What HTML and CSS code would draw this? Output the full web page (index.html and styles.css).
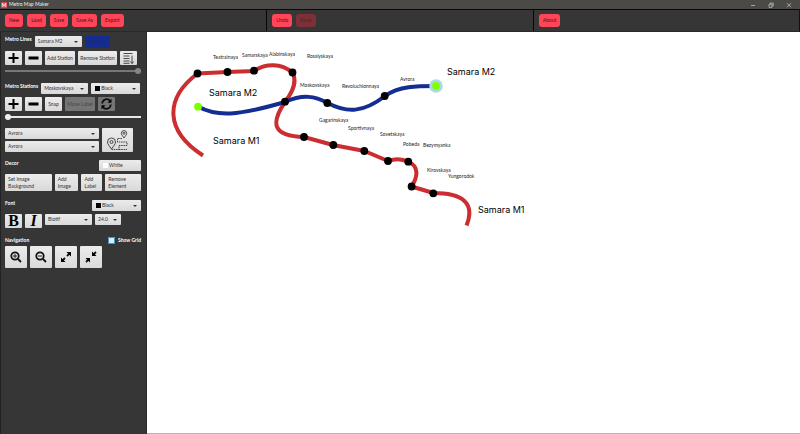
FILE: index.html
```html
<!DOCTYPE html>
<html lang="en">
<head>
<meta charset="utf-8">
<title>Metro Map Maker</title>
<link rel="stylesheet" href="styles.css">
</head>
<body>
<header class="titlebar">
  <span class="app-icon">M</span>
  <h1>Metro Map Maker</h1>
  <div class="window-controls">
    <button aria-label="Minimize"><svg viewBox="0 0 6 6"><path d="M1 3.500h4"/></svg></button>
    <button aria-label="Restore"><svg viewBox="0 0 6 6"><path d="M1 2.300h3v3H1zM2.200 2V1h3v3h-1"/></svg></button>
    <button aria-label="Close"><svg viewBox="0 0 6 6"><path d="M1 1.200l4 4M5 1.200l-4 4"/></svg></button>
  </div>
</header>
<nav class="toolbar">
  <div class="group"><button>New</button><button>Load</button><button>Save</button><button>Save As</button><button>Export</button></div>
  <div class="group"><button>Undo</button><button disabled>Redo</button></div>
  <div class="group"><button>About</button></div>
</nav>
<div class="workspace">
  <aside class="sidebar">
    <section>
      <div class="row head">
        <label class="title" for="line">Metro Lines</label>
        <span class="combo w-mid"><select id="line"><option>Samara M2</option></select></span>
        <button class="edit-line">Edit Line</button>
      </div>
      <div class="row">
        <button class="btn icon" aria-label="Add line"><svg viewBox="0 0 16 14"><path class="heavy" d="M8 2v10M3 7h10"/></svg></button>
        <button class="btn icon" aria-label="Remove line"><svg viewBox="0 0 16 14"><path class="bar" d="M3 7h10"/></svg></button>
        <button class="btn w-add">Add Station</button>
        <button class="btn w-remove">Remove Station</button>
        <button class="btn icon" aria-label="List stations"><svg viewBox="0 0 16 14"><path class="thin" d="M3 2.500h9M3 5h6M3 7.500h6M3 10h6M3 12.300h6M11.500 4.500v8M9.800 10.500l1.700 2 1.700-2"/></svg></button>
      </div>
      <input class="slider dim" type="range" aria-label="Line thickness" min="0" max="100" value="100">
    </section>

    <section>
      <div class="row head">
        <label class="title" for="station">Metro Stations</label>
        <span class="combo w-mid"><select id="station"><option>Moskovskaya</option></select></span>
        <span class="combo swatch w-color"><select aria-label="Station color"><option>Black</option></select></span>
      </div>
      <div class="row">
        <button class="btn icon" aria-label="Add station"><svg viewBox="0 0 16 14"><path class="heavy" d="M8 2v10M3 7h10"/></svg></button>
        <button class="btn icon" aria-label="Remove station"><svg viewBox="0 0 16 14"><path class="bar" d="M3 7h10"/></svg></button>
        <button class="btn icon">Snap</button>
        <button class="btn w-add" disabled>Move Label</button>
        <button class="btn icon rotate" disabled aria-label="Rotate label"><svg viewBox="0 0 16 14"><path class="arc" d="M3.700 6.500C4 1.800 9.500 1 11.700 4M12.300 7.500C12 12.200 6.500 13 4.300 10"/><path d="M13 1.800v4H9zM3 12.200v-4h4z"/></svg></button>
      </div>
      <input class="slider" type="range" aria-label="Station radius" min="0" max="100" value="0">
    </section>

    <section class="route">
      <div class="stops">
        <span class="combo"><select aria-label="Route from"><option>Avrora</option></select></span>
        <span class="combo"><select aria-label="Route to"><option>Avrora</option></select></span>
      </div>
      <button class="btn find" aria-label="Find route"><svg viewBox="0 0 31 23"><path class="thin" d="M9.500 20C7 16.500 5.500 15 5.500 13a4 4 0 0 1 8 0c0 2-1.500 3.500-4 7zM22 9c-1.700-2.500-2.700-3.500-2.700-4.700a2.700 2.700 0 0 1 5.400 0C24.700 5.500 23.700 6.500 22 9z"/><circle class="thin" cx="9.500" cy="13" r="1.500"/><circle class="thin" cx="22" cy="4.300" r="1"/><path class="dash" d="M20 9.500h-4.500v3.500H25v3.500h-8v4H9.500M17 20.500h8"/></svg></button>
    </section>

    <section>
      <div class="row head split">
        <h2 class="title">Decor</h2>
        <span class="combo swatch white"><select aria-label="Background color"><option>White</option></select></span>
      </div>
      <div class="decor">
        <button class="btn">Set Image<br>Background</button>
        <button class="btn">Add<br>Image</button>
        <button class="btn">Add<br>Label</button>
        <button class="btn">Remove<br>Element</button>
      </div>
    </section>

    <section>
      <div class="row head split">
        <h2 class="title">Font</h2>
        <span class="combo swatch w-color"><select aria-label="Font color"><option>Black</option></select></span>
      </div>
      <div class="row">
        <button class="btn icon letter bold">B</button>
        <button class="btn icon letter italic">I</button>
        <span class="combo w-mid"><select aria-label="Font family"><option>Biotif</option></select></span>
        <span class="combo w-size"><select aria-label="Font size"><option>24.0</option></select></span>
      </div>
    </section>

    <section>
      <div class="row split nav-head">
        <h2 class="title">Navigation</h2>
        <label class="check title"><input type="checkbox">Show Grid</label>
      </div>
      <div class="row">
        <button class="btn nav" aria-label="Zoom in"><svg viewBox="0 0 22 22"><circle class="lens" cx="10" cy="10" r="3.700"/><path class="lens" d="M13 13l3 3"/><path class="sign" d="M10 8v4M8 10h4"/></svg></button>
        <button class="btn nav" aria-label="Zoom out"><svg viewBox="0 0 22 22"><circle class="lens" cx="10" cy="10" r="3.700"/><path class="lens" d="M13 13l3 3"/><path class="sign" d="M8 10h4"/></svg></button>
        <button class="btn nav" aria-label="Increase map size"><svg viewBox="0 0 22 22"><path class="lens" d="M12 10l3-3M10 12l-3 3"/><path d="M11.500 6H16v4.500zM6 11.500V16h4.500z"/></svg></button>
        <button class="btn nav" aria-label="Decrease map size"><svg viewBox="0 0 22 22"><path class="lens" d="M13 9l3-3M9 13l-3 3"/><path d="M12 5.500V10h4.500zM5.500 12H10v4.500z"/></svg></button>
      </div>
    </section>
  </aside>

  <main class="canvas">
    <svg class="map" role="img" aria-label="Samara metro map">
      <path class="line red" d="M56 123.500C18 99 17 67 50.500 41.500L80.500 40L107 39C119 31 134 31 145.500 40.500C150 49 147 58 138 70C123 92 126 104 157 105L186 113L217.500 119L241 129C248 126.500 255 126.500 261.500 130C272 134 271 145 264.500 154.500L286.500 161C314 161 329 170 319.500 193.500"/>
      <path class="line blue" d="M51 74.500C70 85 90 84 138 70C156 62 168 64 180.500 71C200 81 216 81 238 64C252 54 270 54 289 54"/>
      <g class="stations">
        <circle cx="50.500" cy="41.500" r="3.900"/><circle cx="80.500" cy="40" r="3.900"/><circle cx="107" cy="38.700" r="3.900"/><circle cx="145.500" cy="40.500" r="3.900"/>
        <circle cx="138" cy="69.700" r="3.900"/><circle cx="180.300" cy="71" r="3.900"/><circle cx="237.700" cy="64" r="3.900"/>
        <circle cx="157" cy="105" r="3.900"/><circle cx="186.300" cy="113" r="3.900"/><circle cx="217.300" cy="119" r="3.900"/><circle cx="241" cy="129" r="3.900"/><circle cx="261.300" cy="129.700" r="3.900"/><circle cx="264.600" cy="154.500" r="3.900"/><circle cx="286.300" cy="161.300" r="3.900"/>
      </g>
      <circle class="halo" cx="289" cy="54" r="6.800"/>
      <circle class="end" cx="51" cy="74.700" r="3.900"/><circle class="end" cx="289" cy="54" r="3.900"/>
      <g class="names">
        <text x="66" y="27">Teatralnaya</text><text x="95" y="25">Samarskaya</text><text x="122" y="24">Alabinskaya</text><text x="160" y="26">Rossiyskaya</text>
        <text x="153" y="55">Moskovskaya</text><text x="195" y="56">Revoluchionnaya</text><text x="253" y="49">Avrora</text>
        <text x="172" y="90">Gagarinskaya</text><text x="201" y="98">Sportivnaya</text><text x="233" y="104">Sovetskaya</text><text x="256" y="114">Pobeda</text><text x="276" y="115">Bezymyanka</text><text x="280" y="140">Kirovskaya</text><text x="301" y="146">Yungorodok</text>
      </g>
      <g class="line-names">
        <text x="62" y="64">Samara M2</text><text x="66" y="112">Samara M1</text><text x="300" y="43">Samara M2</text><text x="331" y="181">Samara M1</text>
      </g>
    </svg>
  </main>
</div>
</body>
</html>
```
FILE: styles.css
```css
* { box-sizing: border-box; }
body {
  margin: 0;
  min-height: 100vh;
  display: flex;
  flex-direction: column;
  background: #fff;
  font: 5px/7px Lato, "Open Sans", sans-serif;
  color: #333;
}
button, select, input { font: inherit; color: inherit; margin: 0; padding: 0; border: 0; }
h1, h2 { margin: 0; font-size: inherit; font-weight: inherit; }
svg { display: block; }

.titlebar {
  display: flex;
  align-items: center;
  gap: 2px;
  height: 10px;
  padding-left: 1px;
  background: #4b4a47;
  border-bottom: 1px solid #080808;
  color: #eee;
}
.app-icon { width: 6px; height: 6px; background: #d8434b; color: #fff; font-weight: 700; line-height: 6px; text-align: center; }
.window-controls { display: flex; gap: 12px; margin-left: auto; padding-right: 8px; }
.window-controls button { width: 6px; height: 6px; background: none; }
.window-controls path { fill: none; stroke: #ccc; stroke-width: .7; }

.toolbar {
  display: grid;
  grid-template-columns: repeat(3, 1fr);
  height: 22px;
  background: #363636;
  border-bottom: 1px solid #2a2a2a;
  border-right: 1px solid #111;
}
.group { display: flex; align-items: center; gap: 4px; padding-left: 5px; }
.group + .group { border-left: 1px solid #080808; }
.toolbar button { height: 13px; padding: 0 4px; border-radius: 3px; background: #ff4557; color: #4d1218; min-width: 17px; }
.toolbar button:disabled { background: #7e3037; color: #55222a; }

.workspace { flex: 1; display: flex; }
.sidebar {
  flex: none;
  width: 147px;
  display: flex;
  flex-direction: column;
  gap: 9px;
  padding: 4px 5px 4px 4px;
  background: #363636;
  border-left: 1px solid #222;
  border-right: 1px solid #2a2a2a;
}
.row { display: flex; align-items: flex-start; gap: 3px; }
.head { margin-bottom: 3px; }
.split { justify-content: space-between; }
.title { color: #fff; font-weight: 700; white-space: nowrap; }
.edit-line { width: 25px; height: 12px; border-radius: 2px; background: #152d93; color: #202a60; }

.btn { height: 14px; flex: none; background: linear-gradient(#ececec, #d9d9d9); border-radius: 1px; color: #333; white-space: nowrap; }
.btn:disabled { background: #757575; color: #484848; }
.icon { width: 17px; }
.icon svg { width: 17px; height: 14px; }
.w-add { width: 30px; }
.w-remove { width: 39px; }
.heavy { fill: none; stroke: #000; stroke-width: 2; }
.bar { fill: none; stroke: #000; stroke-width: 3; }
.thin { fill: none; stroke: #222; stroke-width: .8; }
.arc { fill: none; stroke: #111; stroke-width: 1.8; }

.combo { position: relative; display: block; height: 11px; background: linear-gradient(#ececec, #d9d9d9); border-radius: 1px; }
.combo select { display: block; width: 100%; height: 100%; padding-left: 3px; appearance: none; background: none; color: #333; }
.combo::after {
  content: "";
  position: absolute;
  right: 4px;
  top: 5px;
  border: solid transparent;
  border-width: 2px 2px 0;
  border-top-color: #333;
}
.swatch::before { content: ""; position: absolute; left: 4px; top: 3px; width: 5px; height: 5px; background: #000; }
.swatch select { padding-left: 10px; }
.white { width: 42px; }
.white::before { background: #fff; }
.white::after { display: none; }
.w-mid { width: 47px; }
.w-color { width: 49px; }
.w-size { width: 26px; }

.slider { appearance: none; display: block; width: 100%; height: 6px; margin-top: 3px; background: linear-gradient(#e8e8e8, #e8e8e8) center / 100% 2px no-repeat; }
.slider::-webkit-slider-thumb { appearance: none; width: 6px; height: 6px; border-radius: 50%; background: #eee; }
.dim { background-image: linear-gradient(#777, #777); }
.dim::-webkit-slider-thumb { background: #858585; }

.route { display: flex; gap: 3px; margin: -1px 0; }
.stops { display: flex; flex-direction: column; gap: 2px; width: 94px; }
.find { width: 31px; height: 24px; }
.find svg { width: 31px; height: 23px; }
.dash { fill: none; stroke: #222; stroke-width: .8; stroke-dasharray: 1.6 .7; }

.decor { display: grid; grid-template-columns: 47fr 24fr 21fr 36fr; gap: 3px; }
.decor .btn { height: 17px; padding: 0 3px; text-align: left; }
.letter { font: 700 16px/14px "Liberation Serif", serif; color: #000; }
.italic { font-style: italic; }
.nav-head { align-items: center; margin-bottom: 2px; }
.check { display: flex; align-items: center; gap: 3px; }
.check input { appearance: none; width: 7px; height: 7px; background: #d9edf5; box-shadow: inset 0 0 0 1px #2f9cc6; border-radius: 1px; }
.nav { width: 22px; height: 22px; }
.lens { fill: none; stroke: #111; stroke-width: 1.8; }
.sign { fill: none; stroke: #111; stroke-width: .9; }

.canvas { flex: 1; display: flex; min-width: 0; border-bottom: 1px solid #b5b5b5; }
.map { flex: 1; min-width: 0; }
.line { fill: none; stroke-width: 4; stroke-linejoin: round; }
.red { stroke: #cc2d30; }
.blue { stroke: #152d93; }
.halo { fill: #add8e6; }
.end { fill: #80ff00; }
.names { font: 5px Lato, sans-serif; fill: #222; }
.line-names { font: 9px Inter, sans-serif; fill: #000; }
```
